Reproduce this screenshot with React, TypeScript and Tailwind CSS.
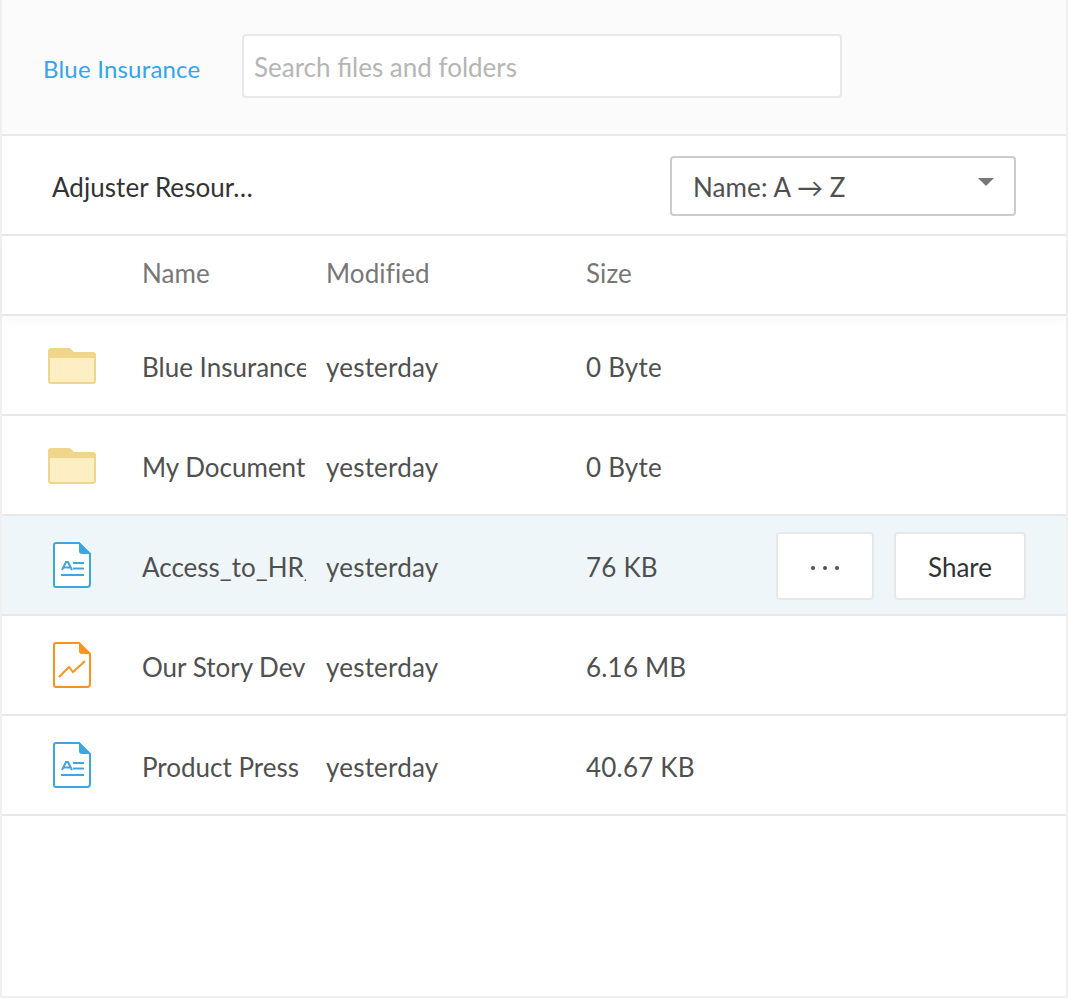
import { ReactNode } from "react";

function FolderIcon() {
  return (
    <svg width="48" height="36" viewBox="0 0 48 36" fill="none" className="mt-[2px]">
      <path d="M0 3 a3 3 0 0 1 3-3 h18 a3 3 0 0 1 2 1 l3 3 h19 a3 3 0 0 1 3 3 v26 a3 3 0 0 1-3 3 h-42 a3 3 0 0 1-3-3z" fill="#f0d68c" />
      <path d="M2 10 h44 v23 a1 1 0 0 1-1 1 h-42 a1 1 0 0 1-1-1z" fill="#fdeec3" />
    </svg>
  );
}

function FileShell({ color, children }: { color: string; children: ReactNode }) {
  return (
    <svg width="38" height="46" viewBox="0 0 38 46" fill="none">
      <path d="M3 1 h23 l11 11 v30 a3 3 0 0 1-3 3 h-31 a2 2 0 0 1-2-2 v-40 a2 2 0 0 1 2-2z" stroke={color} strokeWidth="2" fill="#fff" />
      <path d="M26 0 l12 12 h-9 a3 3 0 0 1-3-3z" fill={color} />
      {children}
    </svg>
  );
}

function DocIcon() {
  return (
    <FileShell color="#41a5dd">
      <path d="M9 28 l4-8 h2 l4 8 M11 25.5 h6 M20 21 h11 M20 26.5 h11 M8 33 h23" stroke="#41a5dd" strokeWidth="2" />
    </FileShell>
  );
}

function ChartIcon() {
  return (
    <FileShell color="#f7941f">
      <path d="M6 35 l10-10 4 5 12-11" stroke="#f7941f" strokeWidth="2" />
    </FileShell>
  );
}

function Row({ icon, name, size, active, children }: { icon: ReactNode; name: string; size: string; active?: boolean; children?: ReactNode }) {
  return (
    <div className={`flex h-[100px] items-center border-b-2 border-[#e8e8e8] text-[26px] tracking-[0.2px] text-[#505050] ${active ? "bg-[#eef6fa]" : ""}`}>
      <div className="flex w-[140px] shrink-0 justify-center">{icon}</div>
      <div className="w-[164px] shrink-0 overflow-hidden whitespace-nowrap pt-[4px] tracking-normal">{name}</div>
      <div className="ml-[20px] w-[260px] shrink-0 pt-[4px]">yesterday</div>
      <div className="w-[190px] shrink-0 whitespace-nowrap pt-[4px]">{size}</div>
      {children}
    </div>
  );
}

export default function App() {
  return (
    <div className="h-[998px] w-[1068px] border-x-2 border-b-2 border-[#f0f0f0] bg-white font-['Lato',sans-serif]">
      <div className="flex h-[136px] items-center border-b-2 border-[#e8e8e8] bg-[#fbfbfb] pl-[41px]">
        <div className="w-[199px] pt-[4px] text-[24px] tracking-[0.2px] text-[#35a4ec]">Blue Insurance</div>
        <div className="mb-[2px] flex h-[64px] w-[600px] items-center rounded border-2 border-[#e8e8e8] bg-white pl-[10px] pt-[2px] text-[26px] text-[#b5b5b5]">Search files and folders</div>
      </div>
      <div className="flex h-[100px] items-center justify-between border-b-2 border-[#e8e8e8] pl-[50px] pr-[50px]">
        <div className="pt-[4px] text-[26px] tracking-[0.05px] text-[#333]">Adjuster Resour…</div>
        <div className="relative mt-[2px] flex h-[60px] w-[346px] items-center rounded border-2 border-[#ccc] pl-[21px] pt-[2px] text-[26px] tracking-[0.1px] text-[#505050]">
          Name: A → Z
          <div className="absolute right-[20px] top-[20px] h-0 w-0 border-x-[8px] border-t-[8px] border-x-transparent border-t-[#777]" />
        </div>
      </div>
      <div className="flex h-[80px] items-center border-b-2 border-[#e8e8e8] pb-[4px] text-[26px] tracking-[0.1px] text-[#777] shadow-[0_4px_12px_rgba(0,0,0,0.03)]">
        <div className="w-[140px] shrink-0" />
        <div className="w-[184px] shrink-0">Name</div>
        <div className="w-[260px] shrink-0">Modified</div>
        <div>Size</div>
      </div>
      <Row icon={<FolderIcon />} name="Blue Insurance" size="0 Byte" />
      <Row icon={<FolderIcon />} name="My Documents" size="0 Byte" />
      <Row icon={<DocIcon />} name="Access_to_HR_Files" size="76 KB" active>
        <div className="mt-[2px] flex gap-[20px]">
          <div className="flex h-[68px] w-[98px] items-center justify-center gap-[8px] rounded border-2 border-[#e8e8e8] bg-white pt-[4px]">
            <span className="h-[4px] w-[4px] rounded-full bg-[#4e4e4e]" />
            <span className="h-[4px] w-[4px] rounded-full bg-[#4e4e4e]" />
            <span className="h-[4px] w-[4px] rounded-full bg-[#4e4e4e]" />
          </div>
          <div className="flex h-[68px] w-[132px] items-center justify-center rounded border-2 border-[#e8e8e8] bg-white pt-[2px] tracking-normal text-[#333]">Share</div>
        </div>
      </Row>
      <Row icon={<ChartIcon />} name="Our Story Development" size="6.16 MB" />
      <Row icon={<DocIcon />} name="Product Press Release" size="40.67 KB" />
    </div>
  );
}
